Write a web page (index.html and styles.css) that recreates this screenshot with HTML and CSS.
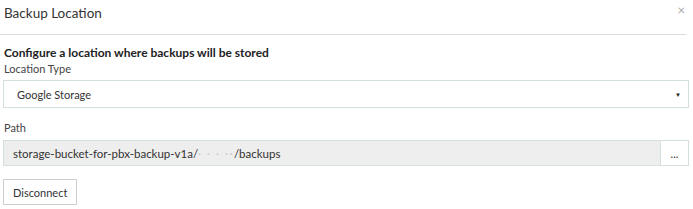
FILE: index.html
```html
<!DOCTYPE html>
<html lang="en">
<head>
  <meta charset="UTF-8" />
  <title>Backup Location</title>
  <link rel="stylesheet" href="styles.css">
</head>
<body>

<div class="modal-header">
  <h4 class="modal-title">Backup Location</h4>
  <span class="close">&times;</span>
</div>

<div class="modal-body">
  <p class="intro">Configure a location where backups will be stored</p>

  <label class="field-label">Location Type</label>
  <div class="select-box">
    <span>Google Storage</span>
    <span class="caret">&#9660;</span>
  </div>

  <label class="field-label path-label">Path</label>
  <div class="input-group">
    <div class="path-input">storage-bucket-for-pbx-backup-v1a/<span class="blurred">&middot; &middot; &middot; &middot;&middot;</span>/backups</div>
    <button class="browse-btn">...</button>
  </div>

  <button class="disconnect-btn">Disconnect</button>
</div>

</body>
</html>
```

FILE: styles.css
```css
body {
  margin: 0;
  background: #fff;
  font-family: Lato, "Open Sans", sans-serif;
  color: #333;
  font-size: 11px;
}
.modal-header {
  display: flex;
  justify-content: space-between;
  height: 35px;
  border-bottom: 1px solid #dcdcdc;
  margin-right: 7px;
  box-sizing: border-box;
}
.modal-title {
  margin: 0;
  padding: 5px 0 0 4px;
  font-size: 13.5px;
  font-weight: normal;
  color: #333;
}
.close {
  color: #aaa;
  font-size: 13px;
  padding: 2px 1px 0 0;
}
.modal-body {
  padding: 10px 4px 0 3px;
}
.intro {
  margin: 0 0 0 1px;
  line-height: 16px;
  font-size: 12px;
  font-weight: bold;
  color: #222;
}
.field-label {
  display: block;
  margin: 0 0 3px 1px;
  line-height: 16px;
  color: #444;
}
.select-box {
  display: flex;
  justify-content: space-between;
  align-items: center;
  height: 28px;
  box-sizing: border-box;
  border: 1px solid #d6dfe0;
  padding: 0 7px 0 13px;
  color: #333;
}
.caret {
  font-size: 6px;
  color: #222;
}
.path-label {
  margin-top: 12px;
  margin-bottom: 4px;
}
.input-group {
  display: flex;
  height: 26px;
}
.path-input {
  flex: 1;
  display: flex;
  align-items: center;
  background: #eee;
  border: 1px solid #d6dfe0;
  padding-left: 9px;
  font-size: 11.5px;
  color: #333;
}
.blurred {
  color: #c8c8c8;
  letter-spacing: 1.5px;
}
.browse-btn {
  width: 28px;
  background: #fff;
  border: 1px solid #d6dfe0;
  border-left: none;
  font-family: inherit;
  font-size: 11px;
  color: #333;
  padding: 0;
}
.disconnect-btn {
  display: block;
  margin-top: 13px;
  height: 26px;
  padding: 0 9px;
  background: #fff;
  border: 1px solid #ccc;
  font-family: inherit;
  font-size: 11px;
  color: #333;
}
```
